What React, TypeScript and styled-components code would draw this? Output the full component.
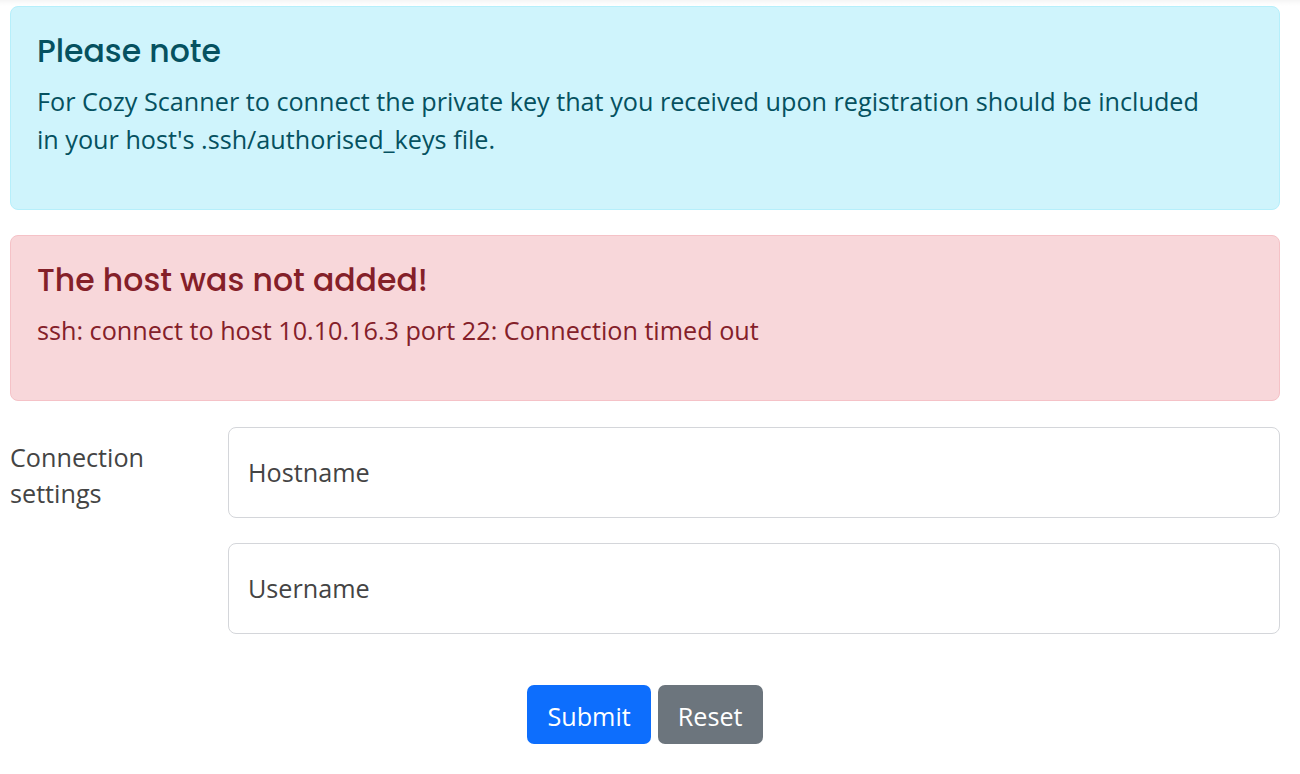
import React from "react";
import styled, { createGlobalStyle } from "styled-components";

const Global = createGlobalStyle`
  html, body { margin: 0; padding: 0; }
  body {
    background: linear-gradient(#f5f5f5 0, #fbfbfb 3px, #fff 6px) no-repeat, #fff;
    font-family: "Open Sans", "Noto Sans", sans-serif;
    font-size: 25.2px;
    color: #444;
  }
  * { box-sizing: border-box; }
`;

const Page = styled.div`
  padding: 6px 20px 20px 10px;
  display: flex;
  flex-direction: column;
`;

const Alert = styled.div<{ $tone: "info" | "danger" }>`
  border: 1px solid ${(p) => (p.$tone === "info" ? "#b6effb" : "#f5c2c7")};
  background: ${(p) => (p.$tone === "info" ? "#cff4fc" : "#f8d7da")};
  color: ${(p) => (p.$tone === "info" ? "#055160" : "#842029")};
  border-radius: 8px;
  padding: 26px 60px 50px 26px;
  margin-bottom: 25px;
`;

const AlertHeading = styled.h4`
  margin: 0 0 12.5px 0;
  font-family: "Poppins", "Inter", "Lato", sans-serif;
  font-weight: 500;
  font-size: 31.5px;
  line-height: 37.8px;
`;

const AlertText = styled.p`
  margin: 0;
  font-size: 25.2px;
  line-height: 37.8px;
`;

const FormRow = styled.div`
  display: grid;
  grid-template-columns: 218px 1fr;
  margin-top: 1px;
`;

const Label = styled.label`
  font-size: 25.2px;
  line-height: 36px;
  color: #444;
  padding-top: 12px;
  padding-right: 40px;
`;

const Fields = styled.div`
  display: flex;
  flex-direction: column;
  gap: 25px;
`;

const Input = styled.input`
  height: 91px;
  width: 100%;
  border: 1px solid #d4d6da;
  border-radius: 8px;
  padding: 0 19px;
  font-family: "Open Sans", "Noto Sans", sans-serif;
  font-size: 25.2px;
  color: #444;
  background: #fff;
  outline: none;
  &::placeholder { color: #444; opacity: 1; }
`;

const Buttons = styled.div`
  display: flex;
  justify-content: center;
  gap: 7px;
  margin-top: 51px;
`;

const Button = styled.button<{ $variant: "primary" | "secondary" }>`
  height: 59px;
  padding: 3px 20px 0;
  border: none;
  border-radius: 7px;
  font-family: "Open Sans", "Noto Sans", sans-serif;
  font-size: 25.2px;
  color: #fff;
  background: ${(p) => (p.$variant === "primary" ? "#0d6efd" : "#6c757d")};
  cursor: pointer;
`;

export default function App() {
  return (
    <>
      <Global />
      <Page>
        <Alert $tone="info">
          <AlertHeading>Please note</AlertHeading>
          <AlertText>
            For Cozy Scanner to connect the private key that you received upon registration should be included
            in your host's .ssh/authorised_keys file.
          </AlertText>
        </Alert>
        <Alert $tone="danger">
          <AlertHeading>The host was not added!</AlertHeading>
          <AlertText>ssh: connect to host 10.10.16.3 port 22: Connection timed out</AlertText>
        </Alert>
        <FormRow>
          <Label>Connection settings</Label>
          <Fields>
            <Input placeholder="Hostname" />
            <Input placeholder="Username" />
          </Fields>
        </FormRow>
        <Buttons>
          <Button $variant="primary">Submit</Button>
          <Button $variant="secondary">Reset</Button>
        </Buttons>
      </Page>
    </>
  );
}
